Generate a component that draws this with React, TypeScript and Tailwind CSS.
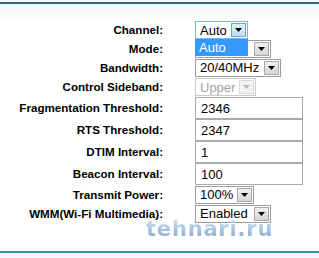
import React from 'react';

interface ISelectProps {
  value: string;
  width: string;
  focused?: boolean;
  disabled?: boolean;
  children?: React.ReactNode;
}

const Arrow: React.FC<{ color: string }> = ({ color }) => (
  <svg width="7" height="4" viewBox="0 0 7 4">
    <path d="M0 0h7L3.5 4z" fill={color} />
  </svg>
);

const Select: React.FC<ISelectProps> = ({ value, width, focused, disabled, children }) => {
  return (
    <div
      className={`relative flex h-[18px] items-center bg-white border ${width} ${
        focused ? 'border-[#7eb4ea]' : disabled ? 'border-[#c9c9c9]' : 'border-[#9c9c9c]'
      }`}
    >
      <span
        className={`flex-1 pl-[4px] text-[13px] leading-none ${
          disabled ? 'text-[#a3a3a3]' : 'text-black'
        }`}
      >
        {value}
      </span>
      <span
        className={`mr-[1px] flex h-[14px] w-[15px] items-center justify-center border ${
          focused
            ? 'border-[#6fa3d3] bg-gradient-to-b from-[#e3f1fc] to-[#bcdcf6]'
            : disabled
            ? 'border-[#d8d8d8] bg-[#f2f2f2]'
            : 'border-[#a8a8a8] bg-gradient-to-b from-[#f0f0f0] to-[#d6d6d6]'
        }`}
      >
        <Arrow color={disabled ? '#b8b8b8' : '#000'} />
      </span>
      {children}
    </div>
  );
};

const Input: React.FC<{ value: string }> = ({ value }) => (
  <div className="flex h-[22px] w-[108px] items-center border border-[#a9a9a9] bg-white pl-[5px] text-[13px] leading-none text-black">
    {value}
  </div>
);

const Row: React.FC<{ label: string; h: string; children: React.ReactNode }> = ({
  label,
  h,
  children,
}) => (
  <div className={`flex items-center ${h}`}>
    <div className="w-[163px] text-right text-[11.6px] font-bold leading-none text-black">
      {label}
    </div>
    <div className="ml-[32px] flex items-center">{children}</div>
  </div>
);

const App: React.FC = () => {
  return (
    <div className="relative h-[258px] w-[319px] overflow-hidden bg-white font-['Liberation_Sans',Arial,sans-serif]">
      <div className="h-[2px] bg-[#f3f9fa]" />
      <div className="h-[2px] bg-[#2a6480]" />
      <div className="h-[247px] bg-gradient-to-b from-[#eef8f9] via-white via-[8%] to-white pt-[16px]">
        <Row label="Channel:" h="h-[20px]">
          <Select value="Auto" width="w-[53px]" focused>
            <div className="absolute left-[-1px] top-[17px] z-10 flex h-[17px] w-[53px] items-center bg-[#3399ff] pl-[4px] text-[13px] leading-none text-white">
              Auto
            </div>
          </Select>
        </Row>
        <Row label="Mode:" h="h-[18px]">
          <Select value="" width="w-[76px]" />
        </Row>
        <Row label="Bandwidth:" h="h-[19px]">
          <Select value="20/40MHz" width="w-[86px]" />
        </Row>
        <Row label="Control Sideband:" h="h-[20px]">
          <Select value="Upper" width="w-[61px]" disabled />
        </Row>
        <Row label="Fragmentation Threshold:" h="h-[22px]">
          <Input value="2346" />
        </Row>
        <Row label="RTS Threshold:" h="h-[22px]">
          <Input value="2347" />
        </Row>
        <Row label="DTIM Interval:" h="h-[22px]">
          <Input value="1" />
        </Row>
        <Row label="Beacon Interval:" h="h-[22px]">
          <Input value="100" />
        </Row>
        <Row label="Transmit Power:" h="h-[19px]">
          <Select value="100%" width="w-[59px]" />
        </Row>
        <Row label="WMM(Wi-Fi Multimedia):" h="h-[19px]">
          <Select value="Enabled" width="w-[76px]" />
        </Row>
      </div>
      <div className="h-[2px] bg-[#3f8db0]" />
      <div className="h-[5px] bg-[#f3f9fb]" />

      {/* watermark */}
      <div className="pointer-events-none absolute left-[146px] top-[219px] bg-gradient-to-b from-[#c8def3] to-[#6a97c9] bg-clip-text font-['DejaVu_Sans',sans-serif] text-[21px] font-bold leading-none tracking-[0.8px] text-transparent opacity-85">
        tehnari.ru
      </div>
    </div>
  );
};

export default App;
